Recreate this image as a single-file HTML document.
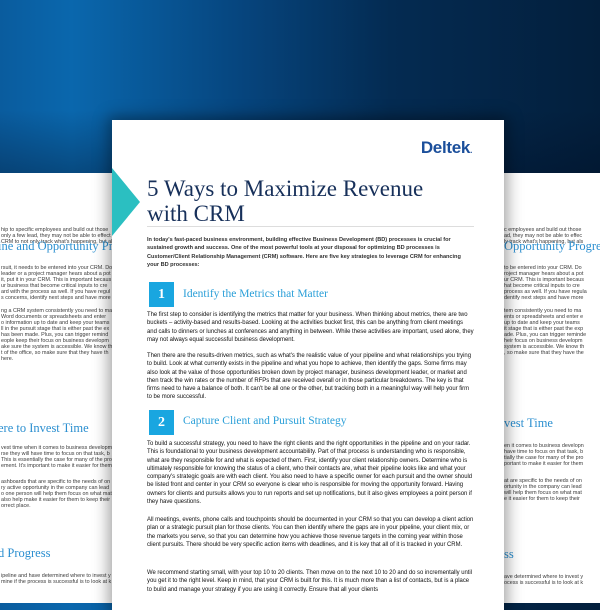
<!DOCTYPE html>
<html><head><meta charset="utf-8"><style>
*{margin:0;padding:0;box-sizing:border-box}
body{width:600px;height:600px;overflow:hidden;position:relative;font-family:"Liberation Sans",sans-serif;
background:linear-gradient(90deg,#0a5c9e 0%,#0a67ad 12%,#06457e 40%,#042b52 65%,#031f3c 100%);}
.shade{position:absolute;left:0;top:110px;width:600px;height:70px;background:linear-gradient(180deg,rgba(0,0,0,0),rgba(0,10,30,.35))}
.side{position:absolute;top:173px;height:430px;background:#fff;overflow:hidden}
.side .in{position:absolute;top:0;white-space:nowrap;font-size:5.4px;color:#3a3a3a;line-height:6px}
.side .l{position:absolute;white-space:nowrap}
.side h4{position:absolute;font-family:"Liberation Serif",serif;font-weight:normal;color:#2b8fd0;font-size:12.5px;white-space:nowrap}
.main{position:absolute;left:112px;top:120px;width:392px;height:490px;background:#fff;box-shadow:0 0 14px 4px rgba(0,0,0,.35)}
.tri{position:absolute;left:0;top:48px;width:0;height:0;border-top:34px solid transparent;border-bottom:34px solid transparent;border-left:28px solid #2bbfc1}
.logo{position:absolute;right:32px;top:18px;font-size:17px;font-weight:bold;color:#1b4f9b;letter-spacing:-.3px}
.title{position:absolute;left:35px;top:56px;font-family:"Liberation Serif","DejaVu Serif",serif;font-size:23px;line-height:25px;color:#17305a}
.rule{position:absolute;left:35px;top:106px;width:327px;height:1px;background:#ddd}
.p{position:absolute;left:35px;width:327px;font-size:5.95px;line-height:8.3px;color:#111;letter-spacing:-.02px}
.b{font-weight:bold;color:#333;font-size:5.6px}
.box{position:absolute;left:37px;width:25px;height:25px;background:#19a6e0;color:#fff;font-family:"Liberation Serif",serif;font-weight:bold;font-size:14px;text-align:center;line-height:25px}
.h{position:absolute;left:71px;font-family:"Liberation Serif",serif;font-size:11.5px;color:#2a9fd8}
</style></head><body>
<div class="shade"></div>

<div class="side" style="left:0;width:112px">
 <div class="in" style="left:0;width:112px">
  <div class="l" style="top:54px;left:1px">hip to specific employees and build out those</div>
  <div class="l" style="top:60px;left:1px">only a few lead, they may not be able to effect</div>
  <div class="l" style="top:66px;left:1px">CRM to not only track what's happening, but al</div>
  <h4 style="top:70px;left:-2px">ine and Opportunity Progress</h4>
  <div class="l" style="top:92px;left:1px">rsuit, it needs to be entered into your CRM. Do</div>
  <div class="l" style="top:98px;left:1px">leader or a project manager hears about a pot</div>
  <div class="l" style="top:104px;left:1px">it, put it in your CRM. This is important becaus</div>
  <div class="l" style="top:110px;left:1px">ur business that become critical inputs to cre</div>
  <div class="l" style="top:116px;left:1px">ard with the process as well. If you have regul</div>
  <div class="l" style="top:122px;left:1px">s concerns, identify next steps and have more</div>
  <div class="l" style="top:135px;left:1px">ng a CRM system consistently you need to ma</div>
  <div class="l" style="top:141px;left:1px">Word documents or spreadsheets and enter</div>
  <div class="l" style="top:147px;left:1px">o information up to date and keep your teams</div>
  <div class="l" style="top:153px;left:1px">ll in the pursuit stage that is either past the ex</div>
  <div class="l" style="top:159px;left:1px">has been made. Plus, you can trigger remind</div>
  <div class="l" style="top:165px;left:1px">eople keep their focus on business developm</div>
  <div class="l" style="top:171px;left:1px">ake sure the system is accessible. We know th</div>
  <div class="l" style="top:177px;left:1px">t of the office, so make sure that they have th</div>
  <div class="l" style="top:183px;left:1px">here.</div>
  <h4 style="top:252px;left:-2px">ere to Invest Time</h4>
  <div class="l" style="top:272px;left:1px">vest time when it comes to business developm</div>
  <div class="l" style="top:278px;left:1px">rse they will have time to focus on that task, b</div>
  <div class="l" style="top:284px;left:1px">This is essentially the case for many of the pro</div>
  <div class="l" style="top:290px;left:1px">ement. It's important to make it easier for them</div>
  <div class="l" style="top:306px;left:1px">ashboards that are specific to the needs of on</div>
  <div class="l" style="top:312px;left:1px">ry active opportunity in the company can lead</div>
  <div class="l" style="top:318px;left:1px">o one person will help them focus on what mat</div>
  <div class="l" style="top:324px;left:1px">also help make it easier for them to keep their</div>
  <div class="l" style="top:330px;left:1px">orrect place.</div>
  <h4 style="top:377px;left:-2px">d Progress</h4>
  <div class="l" style="top:400px;left:1px">ipeline and have determined where to invest y</div>
  <div class="l" style="top:406px;left:1px">mine if the process is successful is to look at k</div>
 </div>
</div>

<div class="side" style="left:504px;width:96px">
 <div class="in" style="left:0;width:96px">
  <div class="l" style="top:54px;left:0">c employees and build out those</div>
  <div class="l" style="top:60px;left:0">ad, they may not be able to effec</div>
  <div class="l" style="top:66px;left:0">ly track what's happening, but als</div>
  <h4 style="top:70px;left:0">Opportunity Progress</h4>
  <div class="l" style="top:92px;left:0">to be entered into your CRM. Do</div>
  <div class="l" style="top:98px;left:0">roject manager hears about a pot</div>
  <div class="l" style="top:104px;left:0">ur CRM. This is important becaus</div>
  <div class="l" style="top:110px;left:0">hat become critical inputs to cre</div>
  <div class="l" style="top:116px;left:0">process as well. If you have regula</div>
  <div class="l" style="top:122px;left:0">dentify next steps and have more</div>
  <div class="l" style="top:135px;left:0">tem consistently you need to ma</div>
  <div class="l" style="top:141px;left:0">ents or spreadsheets and enter e</div>
  <div class="l" style="top:147px;left:0">up to date and keep your teams</div>
  <div class="l" style="top:153px;left:0">it stage that is either past the exp</div>
  <div class="l" style="top:159px;left:0">ade. Plus, you can trigger reminde</div>
  <div class="l" style="top:165px;left:0">heir focus on business developm</div>
  <div class="l" style="top:171px;left:0">system is accessible. We know th</div>
  <div class="l" style="top:177px;left:0">, so make sure that they have the</div>
  <h4 style="top:247px;left:0">vest Time</h4>
  <div class="l" style="top:270px;left:0">en it comes to business developn</div>
  <div class="l" style="top:276px;left:0">have time to focus on that task, b</div>
  <div class="l" style="top:282px;left:0">tially the case for many of the pro</div>
  <div class="l" style="top:288px;left:0">portant to make it easier for them</div>
  <div class="l" style="top:305px;left:0">at are specific to the needs of on</div>
  <div class="l" style="top:311px;left:0">ortunity in the company can lead</div>
  <div class="l" style="top:317px;left:0">will help them focus on what mat</div>
  <div class="l" style="top:323px;left:0">e it easier for them to keep their</div>
  <h4 style="top:378px;left:0">ss</h4>
  <div class="l" style="top:401px;left:0">ave determined where to invest y</div>
  <div class="l" style="top:407px;left:0">ocess is successful is to look at k</div>
 </div>
</div>

<div class="main">
 <div class="tri"></div>
 <div class="logo">Deltek<span style="font-size:8px">.</span></div>
 <div class="title">5 Ways to Maximize Revenue<br>with CRM</div>
 <div class="rule"></div>
 <div class="p b" style="top:116px">In today's fast-paced business environment, building effective Business Development (BD) processes is crucial for sustained growth and success. One of the most powerful tools at your disposal for optimizing BD processes is Customer/Client Relationship Management (CRM) software. Here are five key strategies to leverage CRM for enhancing your BD processes:</div>
 <div class="box" style="top:162px">1</div>
 <div class="h" style="top:168px">Identify the Metrics that Matter</div>
 <div class="p" style="top:191px">The first step to consider is identifying the metrics that matter for your business. When thinking about metrics, there are two buckets – activity-based and results-based. Looking at the activities bucket first, this can be anything from client meetings and calls to dinners or lunches at conferences and anything in between. While these activities are important, used alone, they may not always equal successful business development.</div>
 <div class="p" style="top:232px">Then there are the results-driven metrics, such as what's the realistic value of your pipeline and what relationships you trying to build. Look at what currently exists in the pipeline and what you hope to achieve, then identify the gaps. Some firms may also look at the value of those opportunities broken down by project manager, business development leader, or market and then track the win rates or the number of RFPs that are received overall or in those particular breakdowns. The key is that firms need to have a balance of both. It can't be all one or the other, but tracking both in a meaningful way will help your firm to be more successful.</div>
 <div class="box" style="top:290px">2</div>
 <div class="h" style="top:295px">Capture Client and Pursuit Strategy</div>
 <div class="p" style="top:320px">To build a successful strategy, you need to have the right clients and the right opportunities in the pipeline and on your radar. This is foundational to your business development accountability. Part of that process is understanding who is responsible, what are they responsible for and what is expected of them. First, identify your client relationship owners. Determine who is ultimately responsible for knowing the status of a client, who their contacts are, what their pipeline looks like and what your company's strategic goals are with each client. You also need to have a specific owner for each pursuit and the owner should be listed front and center in your CRM so everyone is clear who is responsible for moving the opportunity forward. Having owners for clients and pursuits allows you to run reports and set up notifications, but it also gives employees a point person if they have questions.</div>
 <div class="p" style="top:396px">All meetings, events, phone calls and touchpoints should be documented in your CRM so that you can develop a client action plan or a strategic pursuit plan for those clients. You can then identify where the gaps are in your pipeline, your client mix, or the markets you serve, so that you can determine how you achieve those revenue targets in the coming year within those client pursuits. There should be very specific action items with deadlines, and it is key that all of it is tracked in your CRM.</div>
 <div class="p" style="top:449px">We recommend starting small, with your top 10 to 20 clients. Then move on to the next 10 to 20 and do so incrementally until you get it to the right level. Keep in mind, that your CRM is built for this. It is much more than a list of contacts, but is a place to build and manage your strategy if you are using it correctly. Ensure that all your clients</div>
</div>
</body></html>
